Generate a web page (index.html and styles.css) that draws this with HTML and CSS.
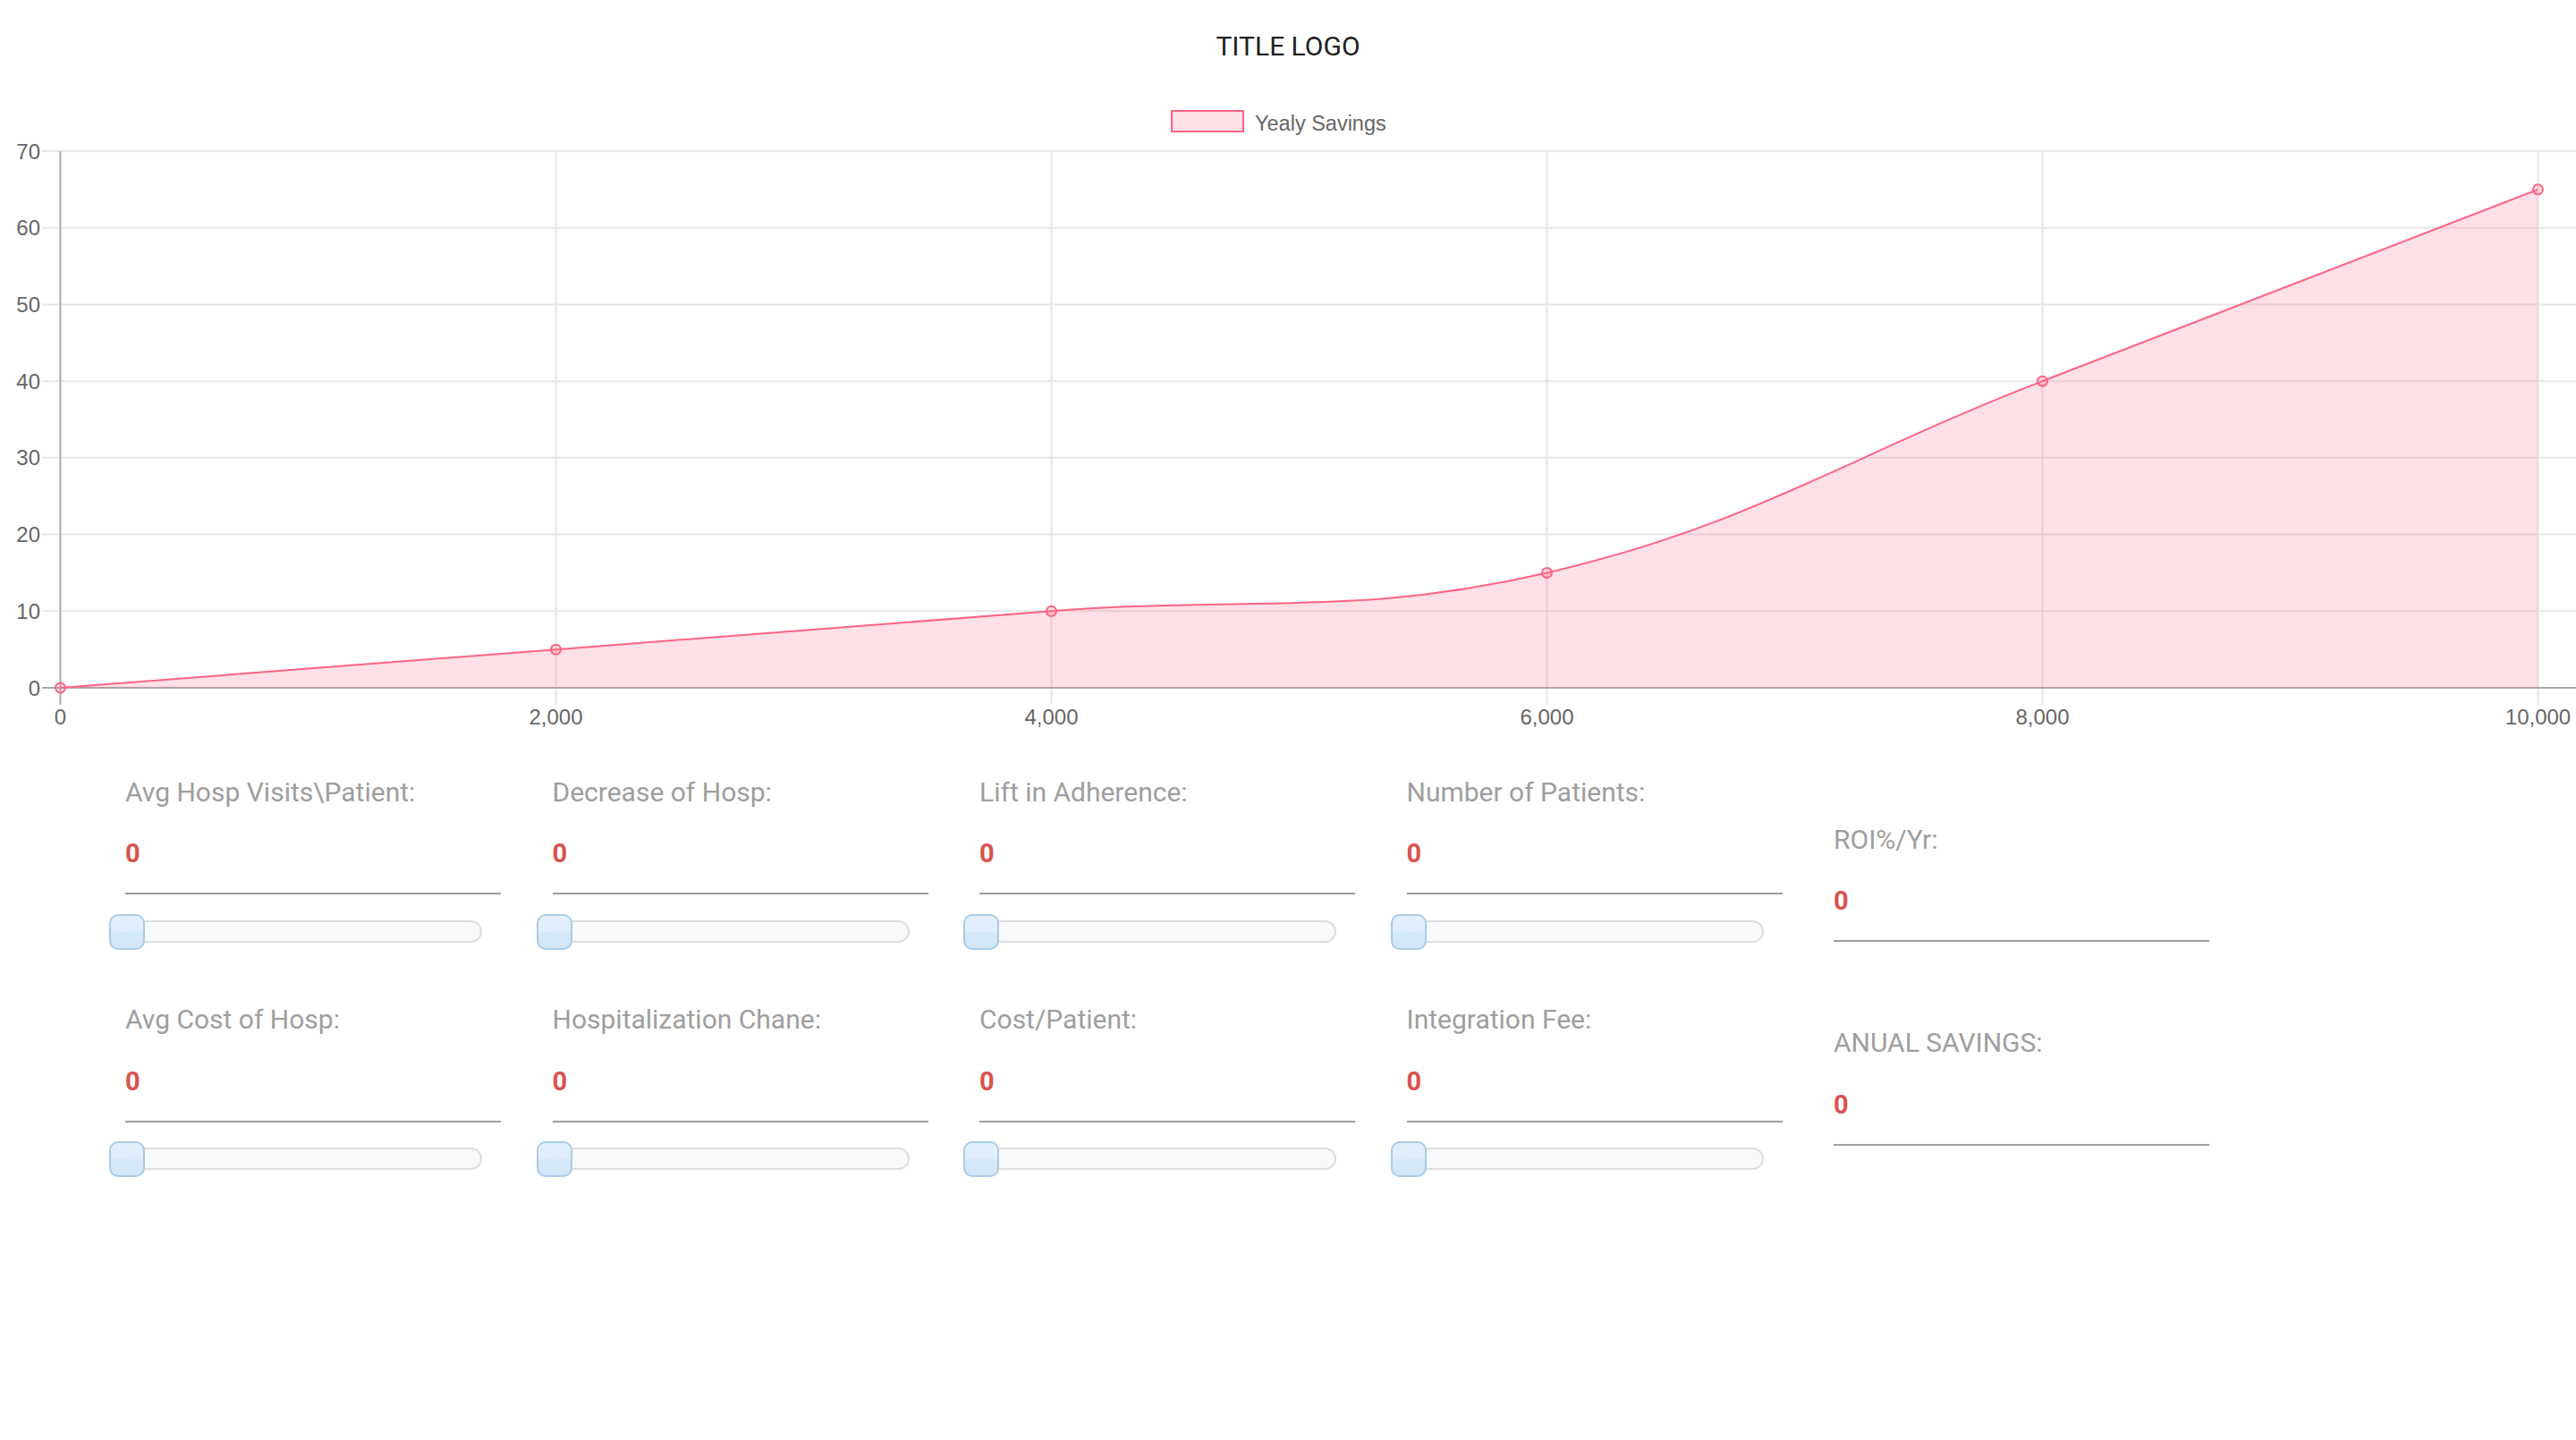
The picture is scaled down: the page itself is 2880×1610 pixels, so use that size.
FILE: index.html
```html
<!DOCTYPE html>
<html lang="en">
<head>
<meta charset="utf-8">
<title>ROI Calculator</title>
<link rel="stylesheet" href="styles.css">
</head>
<body>
<div class="title">TITLE LOGO</div>
<svg class="chart" viewBox="0 100 2880 730" width="2880" height="730" xmlns="http://www.w3.org/2000/svg">
  <g class="grid">
    <line x1="47" y1="169" x2="2880" y2="169"/>
    <line x1="47" y1="254.71" x2="2880" y2="254.71"/>
    <line x1="47" y1="340.43" x2="2880" y2="340.43"/>
    <line x1="47" y1="426.14" x2="2880" y2="426.14"/>
    <line x1="47" y1="511.86" x2="2880" y2="511.86"/>
    <line x1="47" y1="597.57" x2="2880" y2="597.57"/>
    <line x1="47" y1="683.29" x2="2880" y2="683.29"/>
    <line x1="621.5" y1="169" x2="621.5" y2="788"/>
    <line x1="1175.5" y1="169" x2="1175.5" y2="788"/>
    <line x1="1729.5" y1="169" x2="1729.5" y2="788"/>
    <line x1="2283.5" y1="169" x2="2283.5" y2="788"/>
    <line x1="2837.5" y1="169" x2="2837.5" y2="788"/>
  </g>
  <g class="axis">
    <line x1="47" y1="769" x2="2880" y2="769"/>
    <line x1="67.5" y1="169" x2="67.5" y2="788"/>
  </g>
  <path class="area" d="M67.5,769 C289.1,751.857 399.9,743.286 621.5,726.143 C843.1,709 953.9,700.429 1175.5,683.286 C1397.1,666.143 1515.29,690.143 1729.5,640.429 C1958.49,587.286 2061.9,511.857 2283.5,426.143 C2505.1,340.429 2615.9,297.571 2837.5,211.857 L2837.5,769 Z"/>
  <path class="line" d="M67.5,769 C289.1,751.857 399.9,743.286 621.5,726.143 C843.1,709 953.9,700.429 1175.5,683.286 C1397.1,666.143 1515.29,690.143 1729.5,640.429 C1958.49,587.286 2061.9,511.857 2283.5,426.143 C2505.1,340.429 2615.9,297.571 2837.5,211.857"/>
  <g class="pts">
    <circle cx="67.5" cy="769" r="5.5"/>
    <circle cx="621.5" cy="726.14" r="5.5"/>
    <circle cx="1175.5" cy="683.29" r="5.5"/>
    <circle cx="1729.5" cy="640.43" r="5.5"/>
    <circle cx="2283.5" cy="426.14" r="5.5"/>
    <circle cx="2837.5" cy="211.86" r="5.5"/>
  </g>
  <g class="ylab">
    <text x="45" y="177.5">70</text>
    <text x="45" y="263.2">60</text>
    <text x="45" y="348.9">50</text>
    <text x="45" y="434.6">40</text>
    <text x="45" y="520.4">30</text>
    <text x="45" y="606.1">20</text>
    <text x="45" y="691.8">10</text>
    <text x="45" y="777.5">0</text>
  </g>
  <g class="xlab">
    <text x="67.5" y="810">0</text>
    <text x="621.5" y="810">2,000</text>
    <text x="1175.5" y="810">4,000</text>
    <text x="1729.5" y="810">6,000</text>
    <text x="2283.5" y="810">8,000</text>
    <text x="2837.5" y="810">10,000</text>
  </g>
  <rect class="legend-box" x="1310" y="124" width="80" height="23"/>
  <text class="legend-text" x="1403" y="146">Yealy Savings</text>
</svg>

<div class="form">
  <div class="col">
    <div class="field"><div class="label">Avg Hosp Visits\Patient:</div><div class="value">0</div></div>
    <div class="slider"><div class="track"></div><div class="handle"></div></div>
    <div class="field"><div class="label">Avg Cost of Hosp:</div><div class="value">0</div></div>
    <div class="slider"><div class="track"></div><div class="handle"></div></div>
  </div>
  <div class="col">
    <div class="field"><div class="label">Decrease of Hosp:</div><div class="value">0</div></div>
    <div class="slider"><div class="track"></div><div class="handle"></div></div>
    <div class="field"><div class="label">Hospitalization Chane:</div><div class="value">0</div></div>
    <div class="slider"><div class="track"></div><div class="handle"></div></div>
  </div>
  <div class="col">
    <div class="field"><div class="label">Lift in Adherence:</div><div class="value">0</div></div>
    <div class="slider"><div class="track"></div><div class="handle"></div></div>
    <div class="field"><div class="label">Cost/Patient:</div><div class="value">0</div></div>
    <div class="slider"><div class="track"></div><div class="handle"></div></div>
  </div>
  <div class="col">
    <div class="field"><div class="label">Number of Patients:</div><div class="value">0</div></div>
    <div class="slider"><div class="track"></div><div class="handle"></div></div>
    <div class="field"><div class="label">Integration Fee:</div><div class="value">0</div></div>
    <div class="slider"><div class="track"></div><div class="handle"></div></div>
  </div>
  <div class="col col-result">
    <div class="field"><div class="label">ROI%/Yr:</div><div class="value">0</div></div>
    <div class="field"><div class="label">ANUAL SAVINGS:</div><div class="value">0</div></div>
  </div>
</div>
</body>
</html>
```

FILE: styles.css
```css
html, body {
  margin: 0;
  padding: 0;
  background: #ffffff;
}

body {
  font-family: Roboto, "Liberation Sans", sans-serif;
  width: 2880px;
}

.title {
  padding-top: 34px;
  font-size: 30px;
  line-height: 36px;
  text-align: center;
  color: #212121;
}

.chart {
  display: block;
  margin-top: 30px;
}

.grid line {
  stroke: #e6e6e6;
  stroke-width: 2;
}

.axis line {
  stroke: #aaaaaa;
  stroke-width: 2;
}

.area {
  fill: rgba(255, 99, 132, 0.2);
  stroke: none;
}

.line {
  fill: none;
  stroke: #ff6384;
  stroke-width: 2;
}

.pts circle {
  fill: rgba(255, 99, 132, 0.2);
  stroke: #ff6384;
  stroke-width: 2;
}

.ylab text,
.xlab text,
.legend-text {
  font-family: "Liberation Sans", Arial, sans-serif;
  font-size: 24px;
  fill: #666666;
}

.ylab text {
  text-anchor: end;
}

.xlab text {
  text-anchor: middle;
}

.legend-text {
  font-size: 23.5px;
}

.legend-box {
  fill: rgba(255, 99, 132, 0.2);
  stroke: #ff6384;
  stroke-width: 2;
}

.form {
  display: grid;
  grid-template-columns: repeat(4, 477.5px) 420px;
  padding-left: 140px;
  margin-top: 39px;
}

.col {
  display: flex;
  flex-direction: column;
}

.col-result {
  margin-top: 53px;
}

.field {
  width: 420px;
}

.col-result .field + .field {
  margin-top: 96px;
}

.label {
  font-size: 30px;
  line-height: 34px;
  color: #9e9e9e;
}

.value {
  margin-top: 34.3px;
  font-size: 29px;
  font-weight: 700;
  line-height: 34px;
  color: #d9534f;
  padding-bottom: 27px;
  border-bottom: 2px solid #9e9e9e;
}

.slider {
  position: relative;
  display: flex;
  align-items: center;
  margin-top: 21.3px;
  margin-left: -18px;
  width: 417px;
  height: 40px;
}

.slider + .field {
  margin-top: 61.7px;
}

.track {
  box-sizing: border-box;
  width: 100%;
  height: 25px;
  border: 2px solid #dddddd;
  border-radius: 13px;
  background: #f7f9fb;
}

.handle {
  position: absolute;
  left: 0;
  top: 0;
  box-sizing: border-box;
  width: 40px;
  height: 40px;
  border: 2px solid #a8cce8;
  border-radius: 10px;
  background: linear-gradient(#e3f0fc 0%, #e0eefb 48%, #d5e8f8 52%, #d3e6f7 100%);
}
```
